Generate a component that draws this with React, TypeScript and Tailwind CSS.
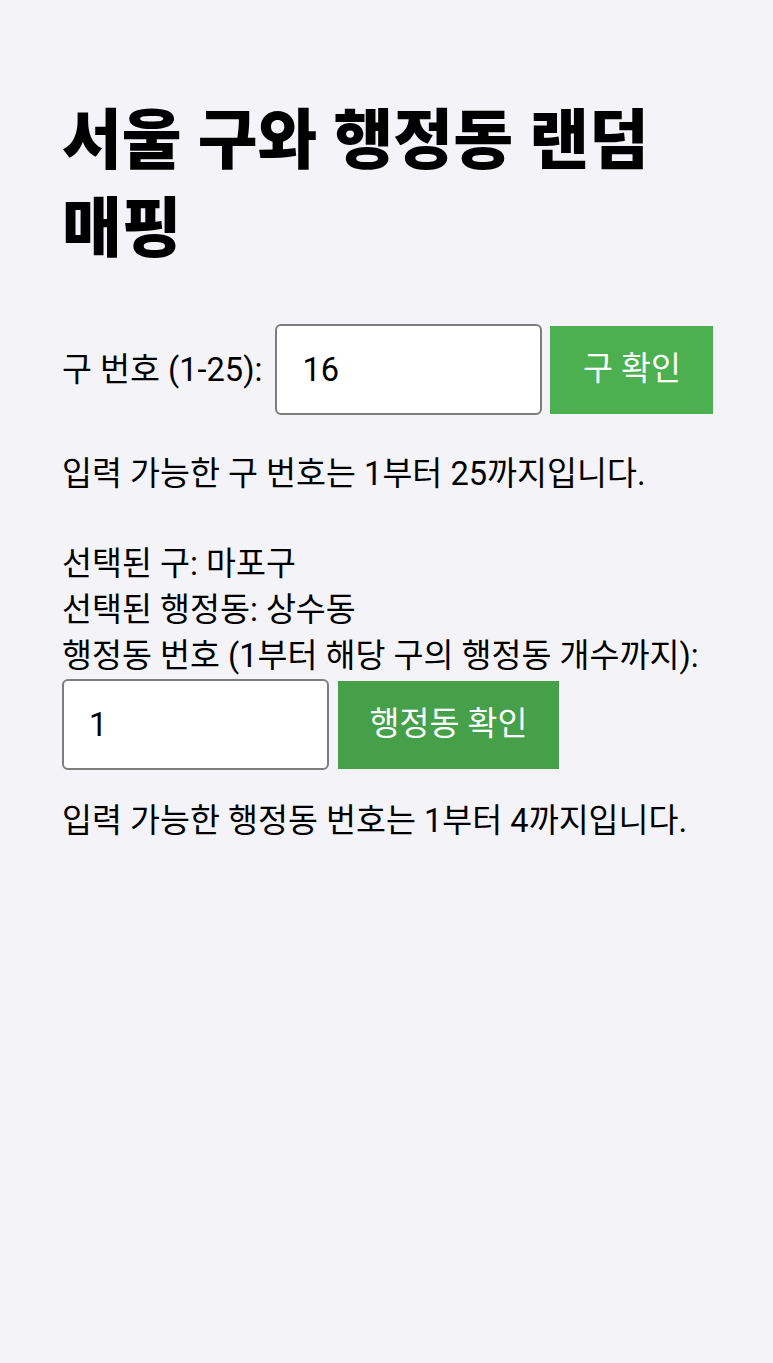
const fontStack = "font-['Roboto','Noto_Sans_CJK_KR',sans-serif]";

const App = () => {
  return (
    <div className={`min-h-screen bg-[#f4f4f8] px-[62px] pt-[97px] text-black ${fontStack}`}>
      {/* Title */}
      <h1 className="text-[65px] font-black leading-[88px]">
        서울 구와 행정동 랜덤 매핑
      </h1>

      {/* 구 선택 */}
      <div className="mt-[51px] flex items-center">
        <label className="shrink-0 whitespace-nowrap text-[32.6px] leading-[46px]">구 번호 (1-25):</label>
        <input
          type="number"
          defaultValue="16"
          className="ml-[13px] h-[91px] w-[267px] shrink-0 rounded-[6px] border-2 border-[#7d7d7d] bg-white px-[25px] text-[32.6px] outline-none"
        />
        <button className="ml-[8px] h-[88px] w-[163px] shrink-0 bg-[#4caf50] text-[32.6px] text-white">
          구 확인
        </button>
      </div>

      <p className="mt-[36px] text-[32.6px] leading-[46px]">
        입력 가능한 구 번호는 1부터 25까지입니다.
      </p>

      {/* 결과 */}
      <div className="mt-[44px] text-[32.6px] leading-[46px]">
        <p>선택된 구: 마포구</p>
        <p>선택된 행정동: 상수동</p>
        <p>행정동 번호 (1부터 해당 구의 행정동 개수까지):</p>
      </div>

      <div className="flex items-center">
        <input
          type="number"
          defaultValue="1"
          className="h-[91px] w-[267px] shrink-0 rounded-[6px] border-2 border-[#7d7d7d] bg-white px-[25px] text-[32.6px] outline-none"
        />
        <button className="ml-[9px] h-[88px] w-[221px] shrink-0 bg-[#45a049] text-[32.6px] text-white">
          행정동 확인
        </button>
      </div>

      <p className="mt-[28px] text-[32.6px] leading-[46px]">
        입력 가능한 행정동 번호는 1부터 4까지입니다.
      </p>
    </div>
  );
};

export default App;
